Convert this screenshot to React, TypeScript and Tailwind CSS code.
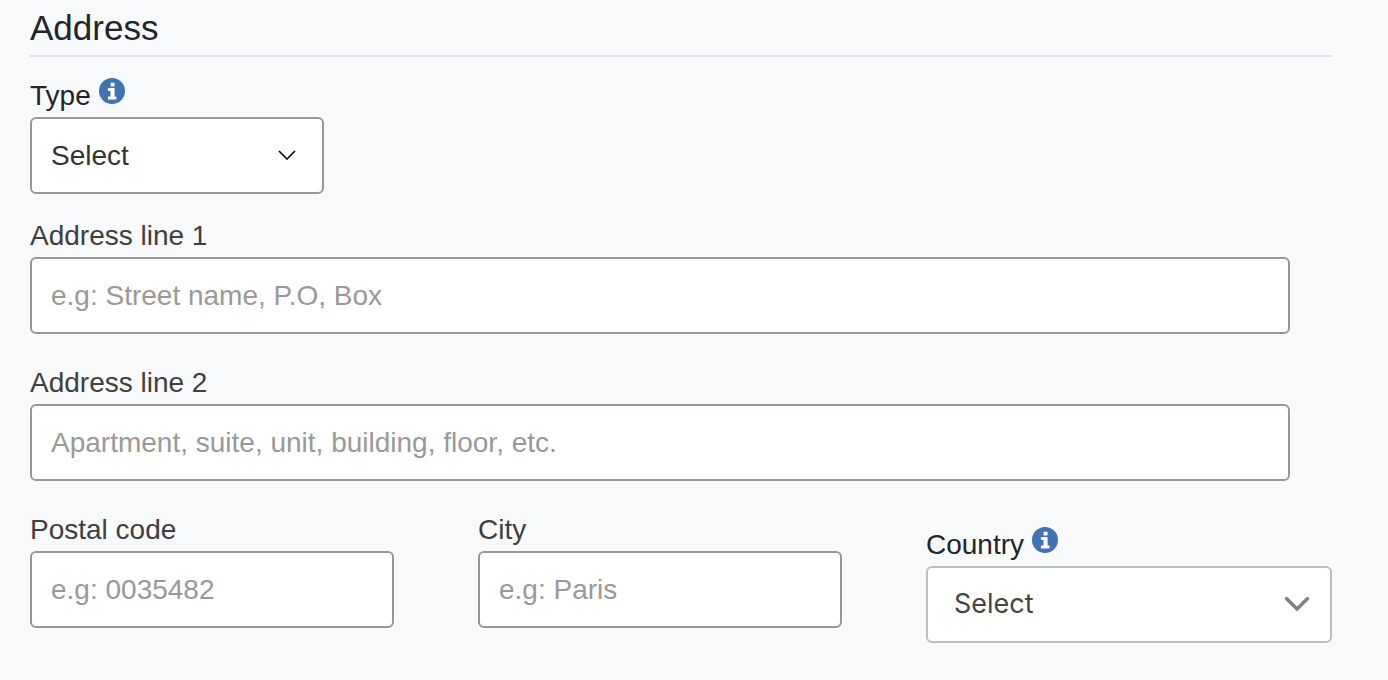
import type { ReactNode } from 'react';

interface FieldProps {
  id: string;
  label: string;
  placeholder: string;
}

const LABEL_CLASS = 'block text-[28px] leading-8 text-[#3f3f3f]';

function InfoIcon() {
  return (
    <svg viewBox="0 0 26 26" className="mb-2.5 size-[26px]" aria-hidden="true">
      <circle cx="13" cy="13" r="13" fill="#4072b4" />
      <path
        fill="#fff"
        d="M12 4.700h3.200q.4 0 .4.400v2.900q0 .4-.4.400H12q-.4 0-.4-.4V5.100q0-.4.400-.4zM9.300 10h5.900q.4 0 .4.400v8h1.400q.4 0 .4.400v2.200q0 .4-.4.400H9.300q-.4 0-.4-.4v-2.200q0-.4.400-.4h2.200v-5.500H9.300q-.4 0-.4-.4v-2.100q0-.4.400-.4z"
      />
    </svg>
  );
}

function InfoLabel({ htmlFor, children }: { htmlFor: string; children: ReactNode }) {
  return (
    <label htmlFor={htmlFor} className="flex items-center gap-2 text-[28px] leading-8 text-[#212529]">
      {children}
      <InfoIcon />
    </label>
  );
}

function TextField({ id, label, placeholder }: FieldProps) {
  return (
    <div>
      <label htmlFor={id} className={LABEL_CLASS}>{label}</label>
      <input
        id={id}
        type="text"
        placeholder={placeholder}
        className="mt-[5px] block h-[77px] w-full rounded-md border-2 border-[#979797] bg-white px-[19px] text-[28px] text-[#333333] placeholder:text-[#999999]"
      />
    </div>
  );
}

export default function App() {
  return (
    <form className="min-h-screen bg-[#f8f9fb] pt-2 pr-14 pb-9 pl-[30px] font-['Liberation_Sans',Arial,sans-serif]">
      <h2 className="border-b-2 border-[#dfe1e4] pb-[7px] text-[35px] leading-10 text-[#212529]">Address</h2>

      <div className="mt-[21px] w-[294px]">
        <InfoLabel htmlFor="type">Type</InfoLabel>
        <div className="relative mt-[3px]">
          <select
            id="type"
            className="block h-[77px] w-full appearance-none rounded-md border-2 border-[#979797] bg-white px-[19px] text-[28px] text-[#333333]"
          >
            <option>Select</option>
          </select>
          <svg
            viewBox="0 0 18 10"
            className="pointer-events-none absolute top-[33px] right-7 h-[10px] w-[18px]"
            fill="none"
            stroke="#000"
            strokeWidth="1.6"
            aria-hidden="true"
          >
            <path d="M1 1l8 8 8-8" />
          </svg>
        </div>
      </div>

      <div className="mt-[26px] mr-[42px] space-y-[33px]">
        <TextField id="line1" label="Address line 1" placeholder="e.g: Street name, P.O, Box" />
        <TextField id="line2" label="Address line 2" placeholder="Apartment, suite, unit, building, floor, etc." />
      </div>

      <div className="mt-[33px] grid grid-cols-[364fr_364fr_406fr] gap-x-[84px]">
        <TextField id="postal" label="Postal code" placeholder="e.g: 0035482" />
        <TextField id="city" label="City" placeholder="e.g: Paris" />
        <div className="pt-[13px]">
          <InfoLabel htmlFor="country">Country</InfoLabel>
          <div className="relative mt-[3px]">
            <select
              id="country"
              className="block h-[77px] w-full appearance-none rounded-md border-2 border-[#bdbdbd] bg-white px-[26px] font-[Inter,sans-serif] text-[27px] text-[#444444]"
            >
              <option>Select</option>
            </select>
            <svg
              viewBox="0 0 26 16"
              className="pointer-events-none absolute top-[30px] right-[22px] h-4 w-[26px]"
              fill="none"
              stroke="#808080"
              strokeWidth="3.4"
              strokeLinecap="round"
              aria-hidden="true"
            >
              <path d="M2.500 2.500L13 13 23.500 2.500" />
            </svg>
          </div>
        </div>
      </div>
    </form>
  );
}
